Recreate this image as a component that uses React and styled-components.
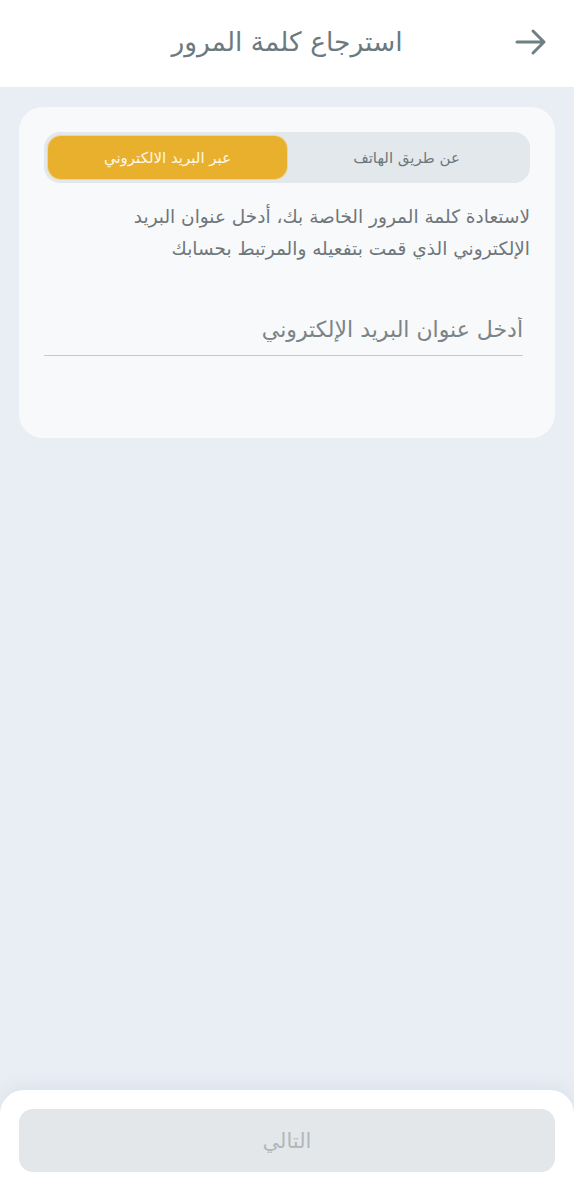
import React, { useState } from 'react';
import styled, { createGlobalStyle } from 'styled-components';

const GlobalStyle = createGlobalStyle`
  html, body {
    margin: 0;
    padding: 0;
    height: 100%;
  }
  body {
    font-family: "DejaVu Sans", "Noto Sans", sans-serif;
    background: #e9eef5;
  }
  #root {
    height: 100%;
  }
`;

const Screen = styled.div`
  direction: rtl;
  height: 1192px;
  display: flex;
  flex-direction: column;
  background: #e9eef5;
`;

const Header = styled.header`
  height: 87px;
  flex-shrink: 0;
  background: #ffffff;
  display: flex;
  align-items: center;
  justify-content: center;
  position: relative;
`;

const Title = styled.h1`
  margin: 0;
  font-size: 26.5px;
  font-weight: 400;
  color: #6c7a7f;
  transform: translateY(-2px);
`;

const BackButton = styled.button`
  position: absolute;
  right: 26px;
  top: 27px;
  width: 34px;
  height: 30px;
  padding: 0;
  border: 0;
  background: none;
  display: flex;
  align-items: center;
  justify-content: center;
  cursor: pointer;
`;

const Body = styled.main`
  flex: 1;
  padding: 20px 19px 0;
`;

const Card = styled.section`
  background: #f7f9fb;
  border-radius: 24px;
  padding: 25px 25px 82px;
  display: flex;
  flex-direction: column;
`;

const Segmented = styled.div`
  height: 51px;
  background: #e3e8ec;
  border-radius: 16px;
  padding: 4px;
  display: flex;
  box-sizing: border-box;
`;

const Segment = styled.button`
  flex: 1;
  border: 0;
  border-radius: 13px;
  font-family: inherit;
  font-size: 15px;
  cursor: pointer;
  background: ${p => (p.$active ? '#e8b02d' : 'transparent')};
  color: ${p => (p.$active ? '#fff8ea' : '#6e777b')};
  box-shadow: ${p => (p.$active ? '0 0 0 1px #f1d596' : 'none')};
`;

const Hint = styled.p`
  margin: 18px 0 0;
  padding-left: 40px;
  font-size: 18.5px;
  line-height: 32px;
  color: #6f7679;
`;

const Field = styled.input`
  margin-top: 42px;
  margin-right: 7px;
  height: 44px;
  border: 0;
  border-bottom: 1.5px solid #c3cacd;
  background: transparent;
  font-family: inherit;
  font-size: 22px;
  color: #4d5659;
  padding: 0 0 4px;
  outline: none;
  &::placeholder {
    color: #7b8487;
  }
`;

const Footer = styled.footer`
  flex-shrink: 0;
  background: #ffffff;
  border-radius: 24px 24px 0 0;
  padding: 19px 19px 20px;
  box-shadow: 0 -6px 14px rgba(200, 208, 220, 0.35);
`;

const NextButton = styled.button`
  width: 100%;
  height: 63px;
  border: 0;
  border-radius: 14px;
  background: #e3e7ea;
  color: #b2b7ba;
  font-family: inherit;
  font-size: 21px;
  cursor: not-allowed;
`;

const ArrowIcon = () => (
  <svg width="32" height="28" viewBox="0 0 32 28" fill="none">
    <path
      d="M2 14h27M18 3l11 11-11 11"
      stroke="#6f7f84"
      strokeWidth="3"
      strokeLinecap="round"
      strokeLinejoin="round"
    />
  </svg>
);

export default function App() {
  const [mode, setMode] = useState('email');
  const [email, setEmail] = useState('');

  return (
    <>
      <GlobalStyle />
      <Screen>
        <Header>
          <BackButton aria-label="رجوع">
            <ArrowIcon />
          </BackButton>
          <Title>استرجاع كلمة المرور</Title>
        </Header>
        <Body>
          <Card>
            <Segmented>
              <Segment $active={mode === 'phone'} onClick={() => setMode('phone')}>
                عن طريق الهاتف
              </Segment>
              <Segment $active={mode === 'email'} onClick={() => setMode('email')}>
                عبر البريد الالكتروني
              </Segment>
            </Segmented>
            <Hint>
              لاستعادة كلمة المرور الخاصة بك، أدخل عنوان البريد الإلكتروني الذي قمت بتفعيله والمرتبط بحسابك
            </Hint>
            <Field
              type="email"
              placeholder="أدخل عنوان البريد الإلكتروني"
              value={email}
              onChange={e => setEmail(e.target.value)}
            />
          </Card>
        </Body>
        <Footer>
          <NextButton disabled={!email}>التالي</NextButton>
        </Footer>
      </Screen>
    </>
  );
}
